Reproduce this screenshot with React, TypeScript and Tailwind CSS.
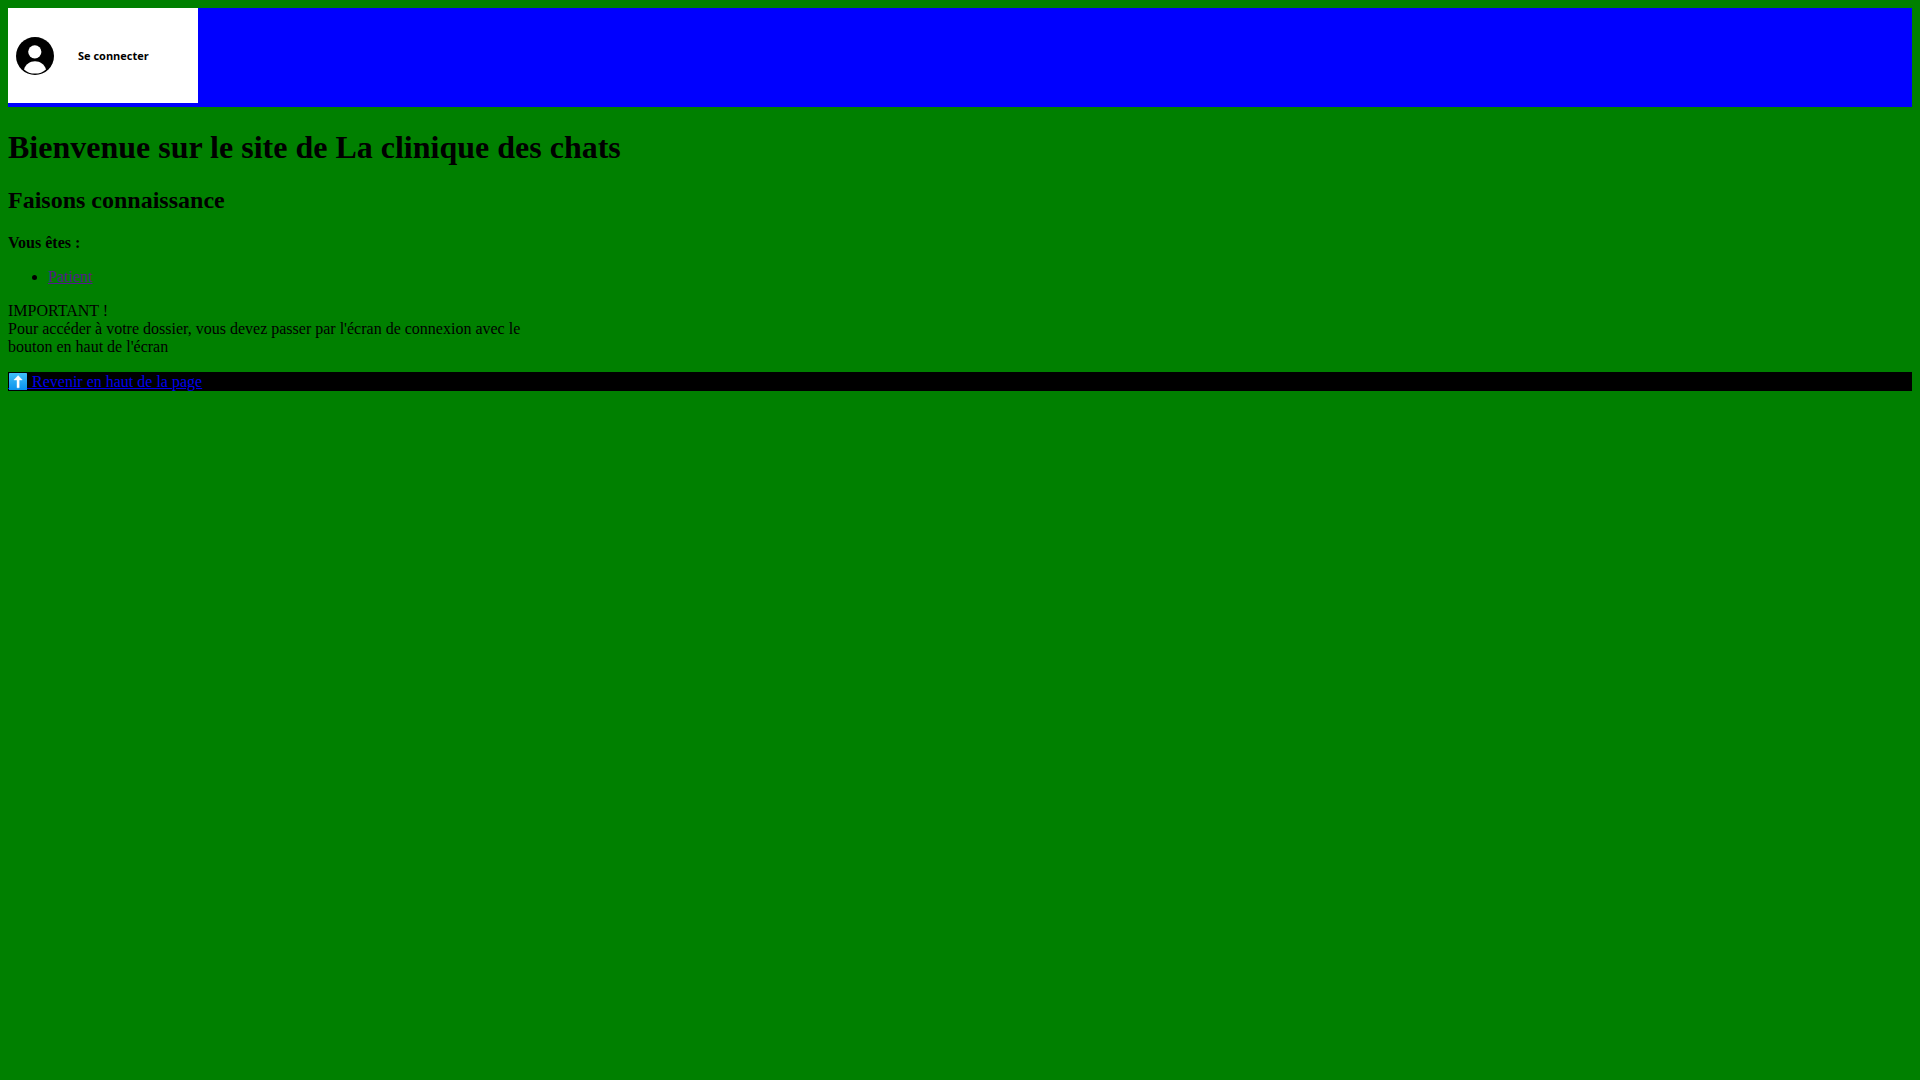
function UserIcon() {
  return (
    <svg viewBox="0 0 38 38" className="w-[38px] h-[38px]" aria-hidden="true">
      <circle cx="19" cy="19" r="19" fill="#000" />
      <circle cx="18.8" cy="14.8" r="6.6" fill="#fff" />
      <path d="M8 32.4C9.6 27.4 13.8 24.3 19 24.3s9.4 3.1 11 8.1C27 35.2 23.2 36.6 19 36.6S11 35.2 8 32.4Z" fill="#fff" />
    </svg>
  );
}

function ArrowUpIcon() {
  return (
    <svg viewBox="0 0 20 19" className="inline-block align-top w-5 h-[19px]" aria-hidden="true">
      <defs>
        <linearGradient id="tile" x1="0" y1="0" x2="0" y2="1">
          <stop offset="0" stopColor="#40c0fa" />
          <stop offset="1" stopColor="#0a92ec" />
        </linearGradient>
      </defs>
      <rect x="0" y="16" width="20" height="1" fill="#0000ee" />
      <rect x="1" y="1" width="18" height="17" rx="0.6" fill="url(#tile)" />
      <path d="M10.1 3.6 14.3 8H11.2V15.8H9V8H5.9Z" fill="#fff" stroke="#fff" strokeWidth="0.4" strokeLinejoin="round" />
    </svg>
  );
}

function Header() {
  return (
    <header className="bg-[#0000ff] pb-1">
      <a
        href="#connexion"
        className="flex items-center gap-6 w-[190px] h-[95px] pl-2 bg-white text-black"
      >
        <UserIcon />
        <span className="font-['Open_Sans',sans-serif] font-bold text-[11px] leading-4">
          Se connecter
        </span>
      </a>
    </header>
  );
}

function Footer() {
  return (
    <footer className="mt-4 bg-black leading-[19px]">
      <a href="#top" className="text-[#0000ee] underline">
        <ArrowUpIcon /> Revenir en haut de la page
      </a>
    </footer>
  );
}

export default function App() {
  return (
    <div
      id="top"
      className="min-h-screen p-2 bg-[#008000] text-black text-[16px] leading-[18px] font-['Liberation_Serif',serif]"
    >
      <Header />

      <main>
        <h1 className="mt-[22px] text-[32px] leading-[37px] font-bold">
          Bienvenue sur le site de La clinique des chats
        </h1>
        <h2 className="mt-5 text-[24px] leading-[28px] font-bold">Faisons connaissance</h2>

        <p className="mt-5 font-bold">Vous êtes :</p>
        <ul className="mt-4 pl-10 list-disc">
          <li>
            <a href="#patient" className="text-[#551a8b] underline">
              Patient
            </a>
          </li>
        </ul>

        <p className="mt-4">
          IMPORTANT !
          <br />
          Pour accéder à votre dossier, vous devez passer par l'écran de connexion avec le
          <br />
          bouton en haut de l'écran
        </p>
      </main>

      <Footer />
    </div>
  );
}
